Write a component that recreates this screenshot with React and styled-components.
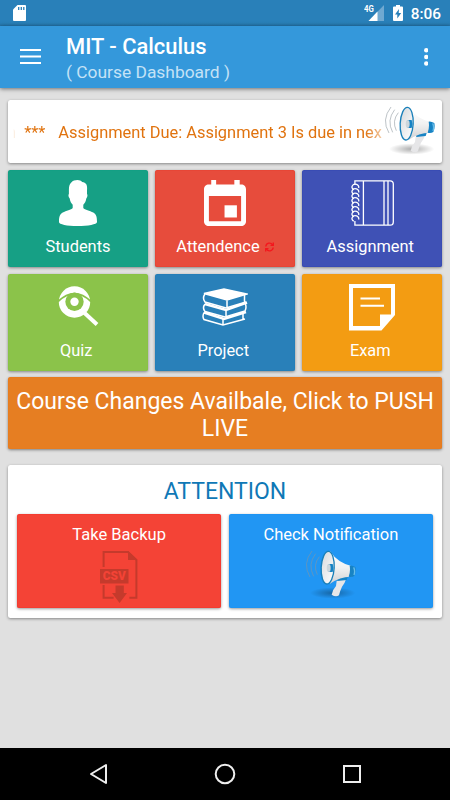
import React from 'react';
import styled, { createGlobalStyle } from 'styled-components';

const GlobalStyle = createGlobalStyle`
  * {
    box-sizing: border-box;
  }
  body {
    margin: 0;
    background: #e0e0e0;
    font-family: Roboto, "Liberation Sans", sans-serif;
  }
  svg {
    display: block;
    flex-shrink: 0;
  }
`;

const Screen = styled.div`
  display: flex;
  flex-direction: column;
  width: 450px;
  height: 800px;
  overflow: hidden;
  background: #e0e0e0;
`;

const StatusBar = styled.div`
  display: flex;
  align-items: center;
  height: 26px;
  padding: 0 9px 0 13px;
  background: linear-gradient(#2980b9 22px, #2475aa);
  color: white;
`;

const StatusRight = styled.div`
  display: flex;
  align-items: center;
  gap: 9px;
  margin-left: auto;
`;

const Clock = styled.span`
  margin-left: -1px;
  font-size: 15.4px;
  font-weight: 500;
  line-height: 26px;
  padding-top: 2px;
`;

const AppBar = styled.header`
  display: flex;
  height: 61.5px;
  padding: 8px 22px 0 20px;
  background: #3498db;
  color: white;
  box-shadow: 0 1px 4px rgba(0, 0, 0, 0.5);
`;

const Titles = styled.div`
  flex: 1;
  margin-left: 25px;
`;

const Title = styled.h1`
  margin: 0;
  font-size: 21.9px;
  font-weight: 500;
  line-height: 26px;
`;

const Subtitle = styled.p`
  margin: 0;
  font-size: 17.4px;
  line-height: 24px;
  color: #c4e2f6;
`;

const BarIcon = styled.div`
  padding-top: ${(props) => props.$top}px;
`;

const Content = styled.main`
  flex: 1;
  padding: 12.5px 8px 0;
`;

const Card = styled.section`
  background: white;
  border-radius: 2.5px;
  box-shadow: 0 1px 3px rgba(0, 0, 0, 0.4);
`;

const Ticker = styled(Card)`
  display: flex;
  height: 63px;
  padding: 5px 7px 0 5px;
`;

const TickerText = styled.div`
  width: 371px;
  margin-right: 1px;
  overflow: hidden;
  white-space: pre;
  font-size: 16.4px;
  line-height: 20px;
  padding-top: 18px;
  color: #e0730f;
  mask-image: linear-gradient(90deg, transparent, black 12px, black 352px, rgba(0, 0, 0, 0.3));
`;

const TickerTrack = styled.span`
  margin-left: -6px;
`;

const Stars = styled.span`
  margin-right: 0.8px;
`;

const Grid = styled.div`
  display: grid;
  grid-template-columns: repeat(3, 1fr);
  grid-auto-rows: 97px;
  gap: 6.6px 7px;
  margin-top: 7px;
`;

const Tile = styled.div`
  display: flex;
  flex-direction: column;
  align-items: center;
  padding-top: 10px;
  border-radius: 2.5px;
  background: ${(props) => props.$color};
  box-shadow: 0 1px 3px rgba(0, 0, 0, 0.4), inset 0 0 1px ${(props) => props.$edge};
  color: white;
`;

const TileIcon = styled.div`
  display: flex;
  justify-content: center;
  width: 48px;
  height: 46px;
`;

const TileLabel = styled.div`
  display: flex;
  align-items: center;
  gap: 5px;
  margin-top: 11px;
  padding-right: ${(props) => (props.$trailing ? 3.5 : 0)}px;
  font-size: 16.4px;
  line-height: 20px;
`;

const PushBanner = styled.div`
  height: 71.5px;
  margin-top: 6.5px;
  padding: 10.5px 4px 0;
  border-radius: 2.5px;
  background: #e67e22;
  box-shadow: 0 1px 3px rgba(0, 0, 0, 0.45), inset 0 0 1px #f07000;
  color: white;
  font-size: 23px;
  line-height: 27px;
  text-align: center;
`;

const Attention = styled(Card)`
  height: 153px;
  margin-top: 16px;
  padding: 13px 9px 0;
`;

const AttentionTitle = styled.h2`
  margin: 0;
  font-size: 23px;
  font-weight: 400;
  line-height: 28px;
  text-align: center;
  color: #0f78b6;
`;

const Actions = styled.div`
  display: grid;
  grid-template-columns: 1fr 1fr;
  gap: 7.5px;
  margin-top: 8px;
`;

const Action = styled(Tile)`
  height: 94.5px;
  padding-top: 11px;
  gap: ${(props) => props.$gap}px;
  font-size: 16.5px;
  line-height: 20px;
`;

const NavBar = styled.nav`
  display: flex;
  justify-content: space-around;
  align-items: center;
  height: 52.5px;
  padding: 0 35.5px;
  background: black;
`;

const SdCardIcon = () => (
  <svg width="13" height="16" viewBox="0 0 13 16">
    <path d="M4.500 0H12q1 0 1 1v14q0 1-1 1H1q-1 0-1-1V4.500z" fill="white" />
    <path d="M5.700 2v3M8.300 2v3M10.800 2v3" stroke="#2980b9" strokeWidth="1.300" />
  </svg>
);

const SignalIcon = () => (
  <svg width="20" height="16" viewBox="0 0 20 16">
    <path d="M20 0v16H4.500z" fill="#70a9d1" />
    <path d="M13.500 6.500V16H4.500z" fill="white" />
    <text x="0" y="7.400" fontSize="9" fontWeight="700" textLength="9.800" lengthAdjust="spacingAndGlyphs" fill="white">4G</text>
  </svg>
);

const BatteryIcon = () => (
  <svg width="10" height="16" viewBox="0 0 10 16">
    <path d="M3 0h4v1.500h2q1 0 1 1V15q0 1-1 1H1q-1 0-1-1V2.500q0-1 1-1h2z" fill="white" />
    <path d="M6 4L2 9.500h2.300V13.500L8.200 8H5.700z" fill="#2980b9" />
  </svg>
);

const StudentIcon = () => (
  <svg width="38" height="46" viewBox="0 0 38 46">
    <path
      d="M18.500 0c2 0 3.500.7 4.600 1.900 4 .3 5.600 3 4.900 8.600v3.500c.8.800.5 3-.7 4.500-.4 3-1.600 4.700-3 6.200v3.300c1.500 2.200 6.500 2.500 10 4.600 3 2 3.700 4.500 3.700 9.400 0 2.500-9 4-19.500 4S0 44.500 0 42c0-5 .7-7.400 3.700-9.400 3.500-2.100 8.500-2.400 10-4.600v-3.300c-1.400-1.500-2.600-3.200-3-6.200-1.300-1.500-1.600-3.700-.8-4.500V9.500C9.900 3.200 13.400 0 18.500 0z"
      fill="white"
    />
  </svg>
);

const CalendarIcon = () => (
  <svg width="42" height="46" viewBox="3 1 18 20" preserveAspectRatio="none">
    <path
      d="M18.300 1h-2.300v2H8.200V1H6.100v2H5c-1.100 0-2 .9-2 2v14c0 1.100.9 2 2 2h14c1.100 0 2-.9 2-2V5c0-1.100-.9-2-2-2h-.7zM18.900 18.900H5.100V8h13.800z"
      fill="white"
      fillRule="evenodd"
    />
    <path d="M11.800 12h5.300v5.300h-5.300z" fill="white" />
  </svg>
);

const coils = [8, 12.5, 17, 21.5, 26, 30.5, 35, 39.5];

const NotebookIcon = () => (
  <svg width="43" height="46" viewBox="0 0 43 46" fill="none" stroke="white" strokeWidth="1.300">
    <path d="M3.900 5V.8h35.200q3.200 0 3.200 3.200v38q0 3.200-3.200 3.200H3.900V41" />
    <path d="M12.400 1v44M33 1v44M37 1v44" />
    {coils.map((y) => (
      <path key={y} d={`M7.600 ${y}a3.400 2.900 0 1 0-4.800 1.700`} />
    ))}
  </svg>
);

const QuizIcon = () => (
  <svg width="42" height="46" viewBox="-0.500 0 42 46">
    <path d="M26 28l13.500 12.500" stroke="white" strokeWidth="4" />
    <circle cx="17" cy="18" r="15.700" fill="white" />
    <circle cx="17" cy="17.700" r="9.200" fill="#8bc34a" />
    <circle cx="17" cy="17.700" r="4.200" fill="white" />
    <path d="M.5 17.500Q17 1.700 33.500 17.500" fill="none" stroke="#8bc34a" strokeWidth="1.800" />
  </svg>
);

const BooksIcon = () => (
  <svg width="46" height="46" viewBox="0 -1 46 46" fill="none" stroke="white" strokeWidth="1.500">
    <path d="M2 8.500L22 4l23 5-20 6z" fill="white" />
    <path d="M3 9q-3 4 0 8l21 6 20-6M25 15.500v7M42.500 10v7" />
    <path d="M3 19l21 6 21-7.500" strokeWidth="2.500" />
    <path d="M3 19q-3 4 0 7.500l20 5.500 20-6M24 25v7M43 18q2 4 0 8" />
    <path d="M2 27.500L22 34l22-7" strokeWidth="2.500" />
    <path d="M2 27.500q-2 4 0 7L21 40l22-6M21 34v6M41 28v6" />
  </svg>
);

const ExamIcon = () => (
  <svg width="46" height="47" viewBox="0 0.600 46 47">
    <path d="M0 .6h46v31L32.500 47H0zM4 4.600v38h27V31h11V4.600z" fill="white" fillRule="evenodd" />
    <path d="M11.500 15.200h19.500M11.500 22.400H35" stroke="white" strokeWidth="2" />
  </svg>
);

const RefreshIcon = () => (
  <svg width="9" height="10" viewBox="0 0 9 10" fill="none" stroke="#f4161d" strokeWidth="1.300">
    <path d="M.8 4.500a3.700 3.700 0 0 1 6.800-1.700M8.200 5.500a3.700 3.700 0 0 1-6.800 1.700M8.300.5v2.800H5.500M.7 9.500V6.700h2.800" />
  </svg>
);

const CsvIcon = () => (
  <svg width="38" height="52" viewBox="0 0 38 52">
    <path
      d="M3.600 16V1h24.400l8.400 8v37.800h-7M3.600 34v12.800h10"
      fill="none"
      stroke="#c53a2c"
      strokeWidth="2"
    />
    <path d="M28 0v9h9.400z" fill="#c53a2c" />
    <path d="M0 18h28.500v14.500H0z" fill="#c53a2c" />
    <path d="M15.500 34.500h8.300V42h3.200l-7.400 10-7.600-10h3.500z" fill="#c53a2c" />
    <text x="2.800" y="29.400" fontSize="12" fontWeight="900" textLength="23" lengthAdjust="spacingAndGlyphs" fill="#f44336">CSV</text>
  </svg>
);

const MegaphoneIcon = ({ id }) => (
  <svg width="50" height="50" viewBox="0 0 150 150">
    <defs>
      <linearGradient id={`${id}-cone`} x1="0" y1="0" x2="0" y2="1">
        <stop offset="0" stopColor="#ffffff" />
        <stop offset="0.5" stopColor="#f2f2f2" />
        <stop offset="1" stopColor="#d2d2d4" />
      </linearGradient>
      <linearGradient id={`${id}-bell`} x1="0" y1="0" x2="1" y2="1">
        <stop offset="0" stopColor="#d6d9dc" />
        <stop offset="1" stopColor="#ffffff" />
      </linearGradient>
      <radialGradient id={`${id}-shadow`}>
        <stop offset="0" stopColor="#000" stopOpacity="0.32" />
        <stop offset="1" stopColor="#000" stopOpacity="0" />
      </radialGradient>
    </defs>
    <ellipse cx="80" cy="132" rx="68" ry="17" fill={`url(#${id}-shadow)`} />
    <g fill="none" stroke="#8a949c" strokeWidth="1.700">
      <path d="M18 6Q-12 44 12 84" />
      <path d="M29 14Q4 46 23 82" />
      <path d="M40 23Q20 48 34 77" />
    </g>
    <path d="M92 96q10-10 28-5-4 14-12 22-5 10-9 26-10 6-22-2 2-14 13-26z" fill="#e6e6e8" />
    <path d="M92 84l34-3-4 12-28 3z" fill="#1783c4" />
    <path d="M72 7Q96 42 136 51v32Q104 82 72 104z" fill={`url(#${id}-cone)`} />
    <path d="M131 50q6-2 17 4 3 14-3 27-8 5-17 2 6-16 3-33z" fill="#1783c4" />
    <path d="M143 55q5 10 1 23" fill="none" stroke="#67bdea" strokeWidth="4" />
    <ellipse cx="65" cy="56" rx="19.500" ry="49" transform="rotate(3 65 56)" fill={`url(#${id}-bell)`} stroke="#187fb9" strokeWidth="4" />
    <path d="M66 45h14q5 12 0 24H66z" fill="#1783c4" />
    <ellipse cx="68" cy="57" rx="6" ry="12" fill="#ccd6dc" />
  </svg>
);

const tiles = [
  { label: 'Students', color: '#16a085', edge: '#00957a', icon: <StudentIcon /> },
  { label: 'Attendence', color: '#e74c3c', edge: '#e81500', icon: <CalendarIcon />, refresh: true },
  { label: 'Assignment', color: '#3f51b5', edge: '#0c25ac', icon: <NotebookIcon />, trailing: true },
  { label: 'Quiz', color: '#8bc34a', edge: '#7bbd2c', icon: <QuizIcon />, trailing: true },
  { label: 'Project', color: '#2980b9', edge: '#0070b5', icon: <BooksIcon />, trailing: true },
  { label: 'Exam', color: '#f39c12', edge: '#ee9000', icon: <ExamIcon />, trailing: true },
];

const App = () => {
  return (
    <>
      <GlobalStyle />
      <Screen>
        <StatusBar>
          <SdCardIcon />
          <StatusRight>
            <SignalIcon />
            <BatteryIcon />
            <Clock>8:06</Clock>
          </StatusRight>
        </StatusBar>
        <AppBar>
          <BarIcon $top={15}>
            <svg width="21" height="15" viewBox="0 0 21 15" stroke="white" strokeWidth="2">
              <path d="M0 1h21M0 7.500h21M0 14h21" />
            </svg>
          </BarIcon>
          <Titles>
            <Title>MIT - Calculus</Title>
            <Subtitle>( Course Dashboard )</Subtitle>
          </Titles>
          <BarIcon $top={14}>
            <svg width="4.500" height="18" viewBox="0 0 4.500 18" fill="white">
              <circle cx="2.250" cy="2.300" r="2.200" />
              <circle cx="2.250" cy="9" r="2.200" />
              <circle cx="2.250" cy="15.500" r="2.200" />
            </svg>
          </BarIcon>
        </AppBar>
        <Content>
          <Ticker>
            <TickerText>
              <TickerTrack>
                <Stars>{'n  ***   '}</Stars>
                {'Assignment Due: Assignment 3 Is due in nex'}
              </TickerTrack>
            </TickerText>
            <MegaphoneIcon id="ticker" />
          </Ticker>
          <Grid>
            {tiles.map((tile) => (
              <Tile key={tile.label} $color={tile.color} $edge={tile.edge}>
                <TileIcon>{tile.icon}</TileIcon>
                <TileLabel $trailing={tile.trailing}>
                  {tile.label}
                  {tile.refresh && <RefreshIcon />}
                </TileLabel>
              </Tile>
            ))}
          </Grid>
          <PushBanner>Course Changes Availbale, Click to PUSH LIVE</PushBanner>
          <Attention>
            <AttentionTitle>ATTENTION</AttentionTitle>
            <Actions>
              <Action $color="#f44336" $edge="#f40000" $gap={6}>
                Take Backup
                <CsvIcon />
              </Action>
              <Action $color="#2196f3" $edge="#0088f0" $gap={4}>
                Check Notification
                <MegaphoneIcon id="notify" />
              </Action>
            </Actions>
          </Attention>
        </Content>
        <NavBar>
          <svg width="20" height="22" viewBox="-1 0 20 22">
            <path d="M17 2v18L2 11z" fill="none" stroke="#eee" strokeWidth="2" strokeLinejoin="round" />
          </svg>
          <svg width="22" height="22" viewBox="0 0 22 22">
            <circle cx="11" cy="11" r="9.300" fill="none" stroke="#eee" strokeWidth="2" />
          </svg>
          <svg width="20" height="20" viewBox="0 0 20 20">
            <rect x="2" y="2" width="16" height="16" fill="none" stroke="#eee" strokeWidth="2" />
          </svg>
        </NavBar>
      </Screen>
    </>
  );
};

export default App;
